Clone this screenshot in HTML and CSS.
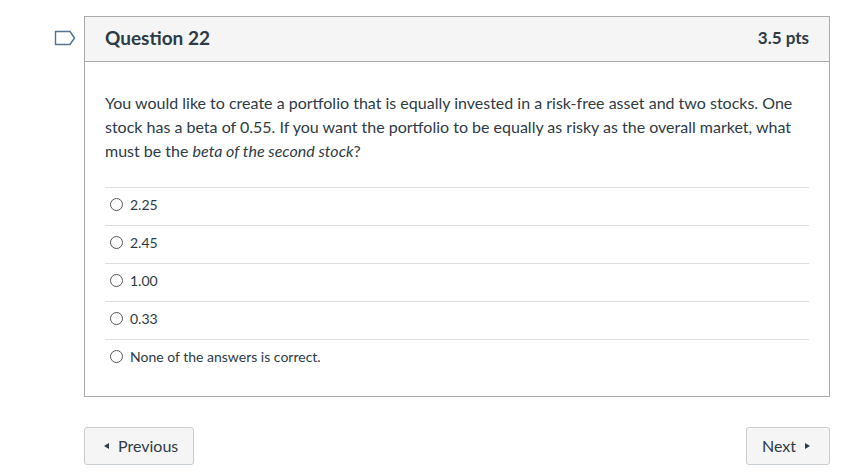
FILE: index.html
```html
<!DOCTYPE html>
<html>
<head>
<meta charset="utf-8">
<link rel="stylesheet" href="styles.css">
</head>
<body>
<div class="page">
  <div class="question">
    <svg class="flag" width="22" height="16" viewBox="0 0 22 16"><path d="M1.5 1.5 H16 L20.5 8 L16 14.5 H1.5 Z" fill="none" stroke="#4f7390" stroke-width="1.4" stroke-linejoin="round"/></svg>
    <div class="q-header">
      <span class="q-title">Question 22</span>
      <span class="q-pts">3.5 pts</span>
    </div>
    <div class="q-body">
      <p class="q-text">You would like to create a portfolio that is equally invested in a risk-free asset and two stocks. One stock has a beta of 0.55. If you want the portfolio to be equally as risky as the overall market, what must be the <em>beta of the second stock</em>?</p>
      <div class="answers">
        <label class="answer"><span class="radio"></span><span>2.25</span></label>
        <label class="answer"><span class="radio"></span><span>2.45</span></label>
        <label class="answer"><span class="radio"></span><span>1.00</span></label>
        <label class="answer"><span class="radio"></span><span>0.33</span></label>
        <label class="answer"><span class="radio"></span><span>None of the answers is correct.</span></label>
      </div>
    </div>
  </div>
  <div class="nav">
    <button class="btn"><span class="tri left"></span>Previous</button>
    <button class="btn">Next<span class="tri right"></span></button>
  </div>
</div>
</body>
</html>
```
FILE: styles.css
```css
html, body { margin: 0; padding: 0; background: #fff; }
body { font-family: Lato, "Open Sans", sans-serif; color: #2d3b45; }
.page { padding: 16px 23px 0 84px; }
.question { position: relative; border: 1px solid #aaaaaa; }
.flag { position: absolute; left: -31px; top: 13px; }
.q-header {
  height: 44px; background: #f5f5f5; border-bottom: 1px solid #aaaaaa;
  display: flex; align-items: center; justify-content: space-between;
  padding: 0 20px 4px 20px; box-sizing: border-box; height: 45px;
}
.q-title { font-size: 19px; font-weight: 700; }
.q-pts { font-size: 17px; font-weight: 700; }
.q-body { padding: 29px 20px 19px 20px; }
.q-text { margin: 0 0 24px 0; font-size: 16px; line-height: 24px; }
.q-text em { font-style: italic; }
.answer {
  display: flex; align-items: center; border-top: 1px solid #dddddd;
  font-size: 14px; padding-left: 5px; padding-bottom: 4px; box-sizing: border-box; height: 38px; gap: 7px;
}
.radio {
  width: 11px; height: 11px; border: 1px solid #555; border-radius: 50%; box-sizing: content-box;
}
.nav { display: flex; justify-content: space-between; margin-top: 30px; }
.btn {
  font-family: Lato, sans-serif; font-size: 16px; color: #2d3b45;
  background: #f5f5f5; border: 1px solid #c7cdd1; border-radius: 3px;
  height: 38px; padding: 0 15px 1px 15px; display: flex; align-items: center; gap: 9px;
}
.tri { width: 0; height: 0; border-top: 3.5px solid transparent; border-bottom: 3.5px solid transparent; }
.tri.left { border-right: 5px solid #2d3b45; margin-left: 4px; }
.tri.right { border-left: 5px solid #2d3b45; margin-right: 4px; }
```
